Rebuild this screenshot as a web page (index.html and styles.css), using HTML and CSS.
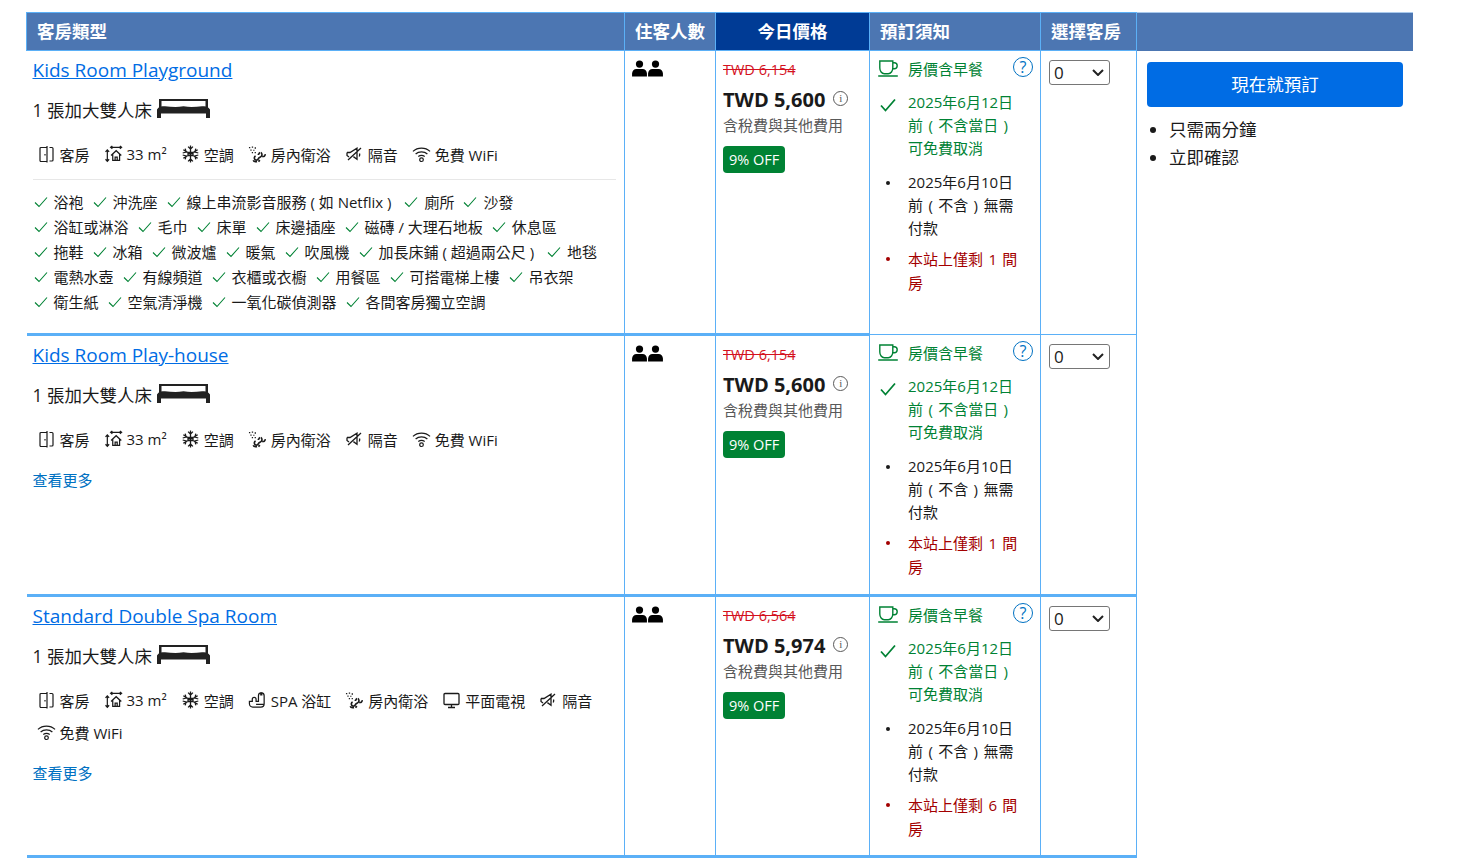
FILE: index.html
```html
<!DOCTYPE html>
<html lang="zh-Hant">
<head>
    <meta charset="UTF-8">
    <title>客房類型</title>
    <link rel="stylesheet" href="styles.css">
</head>
<body>
    <svg class="icon-defs" width="0" height="0">
        <symbol id="i-door" viewBox="0 0 18 18"><path d="M3.500 2.500h6v14h-6a1 1 0 0 1-1-1v-12a1 1 0 0 1 1-1zM9.500 1v16.500M12 2.500h2.500a1 1 0 0 1 1 1v11.500a1 1 0 0 1-1 1H12M7.500 9v1.500" fill="none" stroke="currentColor" stroke-width="1.200"/></symbol>
        <symbol id="i-size" viewBox="0 0 20 18"><path d="M3.500 5v11.500M1.600 6.800l1.900-2.200 1.900 2.200M1.600 14.500l1.900 2.200 1.900-2.200M7 2h11.500M8.800.6 7 2l1.800 1.400M16.700.6 18.500 2l-1.800 1.400M7.400 10.500l5.400-5 5.400 5M9.200 9v6.800h7.200V9M11.700 15.800v-3.500h2.200v3.500" fill="none" stroke="currentColor" stroke-width="1.300"/></symbol>
        <symbol id="i-snow" viewBox="0 0 18 18"><path d="M9 .500v17M1.800 4.800l14.400 8.400M16.200 4.800 1.800 13.200M6.600 1.600 9 4l2.400-2.400M6.600 16.400 9 14l2.400 2.400M1.200 8 4.600 7l-.9-3.300M16.800 10l-3.400 1 .9 3.300M16.800 8l-3.400-1 .9-3.300M1.200 10l3.400 1-.9 3.300M6.500 7.300h5v3.400h-5z" fill="none" stroke="currentColor" stroke-width="1.300"/></symbol>
        <symbol id="i-bath" viewBox="0 0 20 18"><path d="M8 11.200a2.200 2.200 0 1 0 3 2.600c.6-1.700 2.600-1.200 3.400-3 .6-1.300.2-2.800-1-3.300M11.500 7.200c1 .9-.2 2.400-1.300 2M15 11.500c1.800.6 3.200-.6 3-2.300M9.500 17c-2 .4-3.600-.2-4-1.500M11 17l1.500-1.600" fill="none" stroke="currentColor" stroke-width="1.700"/><path d="M1 1.500h1.400v1.400H1zM4 1h1.400v1.400H4zM7 2h1.400v1.400H7zM2.500 4.200h1.300v1.300H2.500zM5.500 4.400h1.300v1.300H5.500zM4 7h1.300v1.300H4zM7 7h1.300v1.300H7z" fill="currentColor"/></symbol>
        <symbol id="i-mute" viewBox="0 0 18 18"><path d="M1.500 7.500h3l7-4.300v11l-3.600-2.600M1.500 7.500v3l2 1.500M2.500 15 15.500 3M14 8.500c.4 1 .3 2-.3 3" fill="none" stroke="currentColor" stroke-width="1.300"/></symbol>
        <symbol id="i-wifi" viewBox="0 0 20 18"><path d="M1 6.200c5-4.600 13-4.600 18 0M3.800 9c3.400-3 9-3 12.400 0M6.600 11.600c2-1.400 4.800-1.400 6.800 0" fill="none" stroke="currentColor" stroke-width="1.300"/><circle cx="10" cy="15" r="1.900" fill="none" stroke="currentColor" stroke-width="1.300"/></symbol>
        <symbol id="i-spa" viewBox="0 0 20 18"><path d="M1.500 10.500h3V8.300a2 2 0 0 1 4 0v2.200H11V4.500a3 3 0 0 1 6 0V13a3.500 3.500 0 0 1-3.500 3.500H5A3.500 3.500 0 0 1 1.500 13zM8.500 13.500H17" fill="none" stroke="currentColor" stroke-width="1.300"/><path d="M12.800 1h2.400v3.200h-2.400z" fill="currentColor"/></symbol>
        <symbol id="i-tv" viewBox="0 0 18 18"><path d="M2.500 2.500h13a1 1 0 0 1 1 1v9a1 1 0 0 1-1 1h-13a1 1 0 0 1-1-1v-9a1 1 0 0 1 1-1zM9 13.500v3M5.500 16.500h7" fill="none" stroke="currentColor" stroke-width="1.300"/></symbol>
        <symbol id="i-bed" viewBox="0 0 55 19"><path d="M3 0h49v2H3z M3 0h2.500v9H3z M49.500 0H52v9h-2.500z" fill="#222"/><path d="M1 10.500c2-3.500 4-3.500 8-3.200 6 .5 11 1.400 18.500 0 7.500 1.400 12.500.5 18.500 0 4-.3 6 0 8 3.200V19h-4v-4.500H5V19H1z" fill="#222"/></symbol>
        <symbol id="i-person" viewBox="0 0 14 16"><circle cx="7" cy="3.800" r="3.400"/><path d="M0 15.500v-2.500c0-3 2-4.500 4-4.500h6c2 0 4 1.500 4 4.500v2.500z"/></symbol>
        <symbol id="i-cup" viewBox="0 0 20 17"><path d="M1.800 1h13v7c0 3-2 5.800-4.500 5.800H6.300C3.800 13.800 1.800 11 1.800 8zM14.800 2.800h1.400a2.500 2.500 0 0 1 0 6H14M.2 16h19.600" fill="none" stroke="currentColor" stroke-width="1.400"/></symbol>
        <symbol id="i-check" viewBox="0 0 14 14"><path d="M1 7.500 5 11.500 13 2.500" fill="none" stroke="currentColor" stroke-width="1.100"/></symbol>
        <symbol id="i-check-bold" viewBox="0 0 16 14"><path d="M1 7.500 5.500 12.500 15 1.500" fill="none" stroke="currentColor" stroke-width="1.800"/></symbol>
    </svg>

    <table class="room-table">
        <thead>
            <tr>
                <th class="col-room">客房類型</th>
                <th class="col-guests">住客人數</th>
                <th class="col-price head-today">今日價格</th>
                <th class="col-notes">預訂須知</th>
                <th class="col-select">選擇客房</th>
                <th class="col-book"></th>
            </tr>
        </thead>
        <tbody>
            <tr class="row-first">
                <td class="cell-room group-end">
                    <a class="room-name" href="#">Kids Room Playground</a>
                    <div class="bed-line">1 張加大雙人床 <svg class="bed-icon"><use href="#i-bed"/></svg></div>
                    <ul class="facilities">
                        <li><svg class="fac-icon"><use href="#i-door"/></svg>客房</li>
                        <li><svg class="fac-icon"><use href="#i-size"/></svg>33 m²</li>
                        <li><svg class="fac-icon"><use href="#i-snow"/></svg>空調</li>
                        <li><svg class="fac-icon"><use href="#i-bath"/></svg>房內衛浴</li>
                        <li><svg class="fac-icon"><use href="#i-mute"/></svg>隔音</li>
                        <li><svg class="fac-icon"><use href="#i-wifi"/></svg>免費 WiFi</li>
                    </ul>
                    <ul class="amenities">
                        <li><svg class="tick"><use href="#i-check"/></svg>浴袍</li>
                        <li><svg class="tick"><use href="#i-check"/></svg>沖洗座</li>
                        <li><svg class="tick"><use href="#i-check"/></svg>線上串流影音服務 ( 如 Netflix )&nbsp;</li>
                        <li><svg class="tick"><use href="#i-check"/></svg>廁所</li>
                        <li><svg class="tick"><use href="#i-check"/></svg>沙發</li>
                        <li><svg class="tick"><use href="#i-check"/></svg>浴缸或淋浴</li>
                        <li><svg class="tick"><use href="#i-check"/></svg>毛巾</li>
                        <li><svg class="tick"><use href="#i-check"/></svg>床單</li>
                        <li><svg class="tick"><use href="#i-check"/></svg>床邊插座</li>
                        <li><svg class="tick"><use href="#i-check"/></svg>磁磚 / 大理石地板</li>
                        <li><svg class="tick"><use href="#i-check"/></svg>休息區</li>
                        <li><svg class="tick"><use href="#i-check"/></svg>拖鞋</li>
                        <li><svg class="tick"><use href="#i-check"/></svg>冰箱</li>
                        <li><svg class="tick"><use href="#i-check"/></svg>微波爐</li>
                        <li><svg class="tick"><use href="#i-check"/></svg>暖氣</li>
                        <li><svg class="tick"><use href="#i-check"/></svg>吹風機</li>
                        <li><svg class="tick"><use href="#i-check"/></svg>加長床鋪 ( 超過兩公尺 )&nbsp;</li>
                        <li><svg class="tick"><use href="#i-check"/></svg>地毯</li>
                        <li><svg class="tick"><use href="#i-check"/></svg>電熱水壺</li>
                        <li><svg class="tick"><use href="#i-check"/></svg>有線頻道</li>
                        <li><svg class="tick"><use href="#i-check"/></svg>衣櫃或衣櫥</li>
                        <li><svg class="tick"><use href="#i-check"/></svg>用餐區</li>
                        <li><svg class="tick"><use href="#i-check"/></svg>可搭電梯上樓</li>
                        <li><svg class="tick"><use href="#i-check"/></svg>吊衣架</li>
                        <li><svg class="tick"><use href="#i-check"/></svg>衛生紙</li>
                        <li><svg class="tick"><use href="#i-check"/></svg>空氣清淨機</li>
                        <li><svg class="tick"><use href="#i-check"/></svg>一氧化碳偵測器</li>
                        <li><svg class="tick"><use href="#i-check"/></svg>各間客房獨立空調</li>
                    </ul>
                </td>
                <td class="cell-guests group-end"><svg class="person"><use href="#i-person"/></svg><svg class="person"><use href="#i-person"/></svg></td>
                <td class="cell-price group-end">
                    <div class="old-price">TWD 6,154</div>
                    <div class="new-price">TWD 5,600 <span class="info">i</span></div>
                    <div class="tax-note">含稅費與其他費用</div>
                    <span class="deal">9% OFF</span>
                </td>
                <td class="cell-notes">
                    <div class="note note-green note-top"><svg class="note-cup"><use href="#i-cup"/></svg><span>房價含早餐</span><span class="help">?</span></div>
                    <div class="note note-green"><svg class="note-check"><use href="#i-check-bold"/></svg><span class="note-text">2025年6月12日前 ( 不含當日 ) 可免費取消</span></div>
                    <div class="note note-plain"><span class="note-dot"></span><span class="note-text">2025年6月10日前 ( 不含 ) 無需付款</span></div>
                    <div class="note note-red"><span class="note-dot"></span><span class="note-text">本站上僅剩 1 間房</span></div>
                </td>
                <td class="cell-select"><select class="qty"><option>0</option></select></td>
                <td class="cell-book" rowspan="3">
                    <button class="book-btn">現在就預訂</button>
                    <ul class="book-points">
                        <li>只需兩分鐘</li>
                        <li>立即確認</li>
                    </ul>
                </td>
            </tr>
            <tr class="row-second">
                <td class="cell-room group-end">
                    <a class="room-name" href="#">Kids Room Play-house</a>
                    <div class="bed-line">1 張加大雙人床 <svg class="bed-icon"><use href="#i-bed"/></svg></div>
                    <ul class="facilities">
                        <li><svg class="fac-icon"><use href="#i-door"/></svg>客房</li>
                        <li><svg class="fac-icon"><use href="#i-size"/></svg>33 m²</li>
                        <li><svg class="fac-icon"><use href="#i-snow"/></svg>空調</li>
                        <li><svg class="fac-icon"><use href="#i-bath"/></svg>房內衛浴</li>
                        <li><svg class="fac-icon"><use href="#i-mute"/></svg>隔音</li>
                        <li><svg class="fac-icon"><use href="#i-wifi"/></svg>免費 WiFi</li>
                    </ul>
                    <a class="see-more" href="#">查看更多</a>
                </td>
                <td class="cell-guests group-end"><svg class="person"><use href="#i-person"/></svg><svg class="person"><use href="#i-person"/></svg></td>
                <td class="cell-price group-end">
                    <div class="old-price">TWD 6,154</div>
                    <div class="new-price">TWD 5,600 <span class="info">i</span></div>
                    <div class="tax-note">含稅費與其他費用</div>
                    <span class="deal">9% OFF</span>
                </td>
                <td class="cell-notes group-end">
                    <div class="note note-green note-top"><svg class="note-cup"><use href="#i-cup"/></svg><span>房價含早餐</span><span class="help">?</span></div>
                    <div class="note note-green"><svg class="note-check"><use href="#i-check-bold"/></svg><span class="note-text">2025年6月12日前 ( 不含當日 ) 可免費取消</span></div>
                    <div class="note note-plain"><span class="note-dot"></span><span class="note-text">2025年6月10日前 ( 不含 ) 無需付款</span></div>
                    <div class="note note-red"><span class="note-dot"></span><span class="note-text">本站上僅剩 1 間房</span></div>
                </td>
                <td class="cell-select group-end"><select class="qty"><option>0</option></select></td>
            </tr>
            <tr class="row-third">
                <td class="cell-room group-end">
                    <a class="room-name" href="#">Standard Double Spa Room</a>
                    <div class="bed-line">1 張加大雙人床 <svg class="bed-icon"><use href="#i-bed"/></svg></div>
                    <ul class="facilities">
                        <li><svg class="fac-icon"><use href="#i-door"/></svg>客房</li>
                        <li><svg class="fac-icon"><use href="#i-size"/></svg>33 m²</li>
                        <li><svg class="fac-icon"><use href="#i-snow"/></svg>空調</li>
                        <li><svg class="fac-icon"><use href="#i-spa"/></svg>SPA 浴缸</li>
                        <li><svg class="fac-icon"><use href="#i-bath"/></svg>房內衛浴</li>
                        <li><svg class="fac-icon"><use href="#i-tv"/></svg>平面電視</li>
                        <li><svg class="fac-icon"><use href="#i-mute"/></svg>隔音</li>
                        <li><svg class="fac-icon"><use href="#i-wifi"/></svg>免費 WiFi</li>
                    </ul>
                    <a class="see-more" href="#">查看更多</a>
                </td>
                <td class="cell-guests group-end"><svg class="person"><use href="#i-person"/></svg><svg class="person"><use href="#i-person"/></svg></td>
                <td class="cell-price group-end">
                    <div class="old-price">TWD 6,564</div>
                    <div class="new-price">TWD 5,974 <span class="info">i</span></div>
                    <div class="tax-note">含稅費與其他費用</div>
                    <span class="deal">9% OFF</span>
                </td>
                <td class="cell-notes group-end">
                    <div class="note note-green note-top"><svg class="note-cup"><use href="#i-cup"/></svg><span>房價含早餐</span><span class="help">?</span></div>
                    <div class="note note-green"><svg class="note-check"><use href="#i-check-bold"/></svg><span class="note-text">2025年6月12日前 ( 不含當日 ) 可免費取消</span></div>
                    <div class="note note-plain"><span class="note-dot"></span><span class="note-text">2025年6月10日前 ( 不含 ) 無需付款</span></div>
                    <div class="note note-red"><span class="note-dot"></span><span class="note-text">本站上僅剩 6 間房</span></div>
                </td>
                <td class="cell-select group-end"><select class="qty"><option>0</option></select></td>
            </tr>
        </tbody>
    </table>
</body>
</html>
```

FILE: styles.css
```css
body {
    margin: 0;
    padding: 12px 46px 0 26px;
    background-color: #ffffff;
    color: #1a1a1a;
    font-family: "Open Sans", "Noto Sans CJK TC", sans-serif;
    font-size: 15px;
    overflow: hidden;
}
.icon-defs {
    position: absolute;
}
ul {
    list-style: none;
    margin: 0;
    padding: 0;
}
.room-table {
    width: 1386px;
    table-layout: fixed;
    border-collapse: collapse;
}
.room-table th {
    box-sizing: border-box;
    height: 38px;
    padding: 0 10px 2px;
    background-color: #4c76b2;
    border: 1px solid #5bb0f7;
    color: #ffffff;
    font-size: 17.5px;
    font-weight: 700;
    text-align: left;
}
.room-table th.head-today {
    background-color: #003b95;
    text-align: center;
}
.room-table th.col-book {
    border-width: 1px 0 0 1px;
    border-top-color: #a9c9ec;
}
.col-room { width: 598px; }
.col-guests { width: 91px; }
.col-price { width: 154px; }
.col-notes { width: 171px; }
.col-select { width: 96px; }
.col-book { width: 276px; }

.room-table td {
    box-sizing: border-box;
    padding: 0;
    border: 1px solid #5bb0f7;
    vertical-align: top;
}
.room-table td.group-end {
    border-bottom: 3px solid #5bb0f7;
}
.row-first td { height: 284px; }
.row-second td { height: 261px; }
.row-third td { height: 261px; }
.room-table td.cell-book {
    border-width: 0 0 0 1px;
    padding: 11px 10px 0;
}

.room-table td.cell-room {
    padding: 5px 8px 0 6px;
    border-left: none;
}
.room-name {
    display: block;
    width: fit-content;
    color: #006ce4;
    font-size: 19px;
    line-height: 28px;
}
.bed-line {
    display: flex;
    align-items: center;
    gap: 4px;
    height: 26px;
    margin-top: 12px;
    font-size: 17.5px;
}
.bed-icon {
    width: 55px;
    height: 19px;
    margin-top: -2px;
}
.facilities {
    display: flex;
    flex-wrap: wrap;
    column-gap: 14px;
    row-gap: 8px;
    margin-top: 20px;
    padding-left: 4px;
}
.facilities li {
    display: flex;
    align-items: center;
    gap: 4px;
    height: 24px;
    font-size: 15px;
}
.fac-icon {
    width: 19px;
    height: 18px;
}
.amenities {
    display: flex;
    flex-wrap: wrap;
    margin-top: 13px;
    padding-top: 9px;
    border-top: 1px solid #e7e7e7;
}
.amenities li {
    display: flex;
    align-items: center;
    gap: 6px;
    height: 25px;
    margin-right: 8px;
    font-size: 15px;
    white-space: pre;
}
.tick {
    width: 14px;
    height: 14px;
    margin-left: 1px;
    color: #008234;
}
.see-more {
    display: block;
    margin-top: 17px;
    color: #0071c2;
    font-size: 15px;
    line-height: 24px;
    text-decoration: none;
}

.room-table td.cell-guests {
    padding: 9px 0 0 7px;
    line-height: 0;
}
.person {
    width: 15px;
    height: 17px;
    margin-right: 1px;
    fill: #000000;
}

.room-table td.cell-price {
    padding: 8px 8px 0 7px;
}
.old-price {
    color: #d4111e;
    font-size: 14.5px;
    line-height: 22px;
    text-decoration: line-through;
}
.new-price {
    display: flex;
    align-items: center;
    gap: 8px;
    margin-top: 5px;
    font-size: 20px;
    font-weight: 700;
    line-height: 28px;
}
.info {
    display: flex;
    align-items: center;
    justify-content: center;
    width: 13px;
    height: 13px;
    margin-top: -4px;
    border: 1px solid #595959;
    border-radius: 50%;
    color: #595959;
    font-family: "Liberation Serif", serif;
    font-size: 11px;
    font-weight: 400;
}
.tax-note {
    color: #595959;
    font-size: 15px;
    line-height: 22px;
}
.deal {
    display: inline-block;
    margin-top: 10px;
    padding: 0 6px;
    background-color: #008234;
    border-radius: 4px;
    color: #ffffff;
    font-size: 14.5px;
    line-height: 27px;
}

.room-table td.cell-notes {
    padding: 6px 7px 0 8px;
}
.note {
    display: flex;
    gap: 10px;
    margin-bottom: 11px;
    font-size: 15px;
    line-height: 23px;
}
.note-top {
    align-items: center;
    height: 24px;
    margin-bottom: 10px;
}
.note-plain {
    margin-bottom: 7px;
}
.note-green {
    color: #008234;
}
.note-red {
    color: #a30000;
    line-height: 24px;
}
.note-cup {
    width: 20px;
    height: 17px;
    margin-top: -2px;
}
.note-check {
    flex: none;
    width: 16px;
    height: 14px;
    margin: 7px 2px 0 2px;
}
.note-dot {
    flex: none;
    width: 4px;
    height: 4px;
    margin: 10px 8px 0 8px;
    background-color: currentColor;
    border-radius: 50%;
}
.note-text {
    width: 115px;
    word-spacing: 1.5px;
}
.help {
    display: flex;
    flex: none;
    align-items: center;
    justify-content: center;
    box-sizing: border-box;
    width: 20px;
    height: 20px;
    margin-top: -4px;
    margin-left: 20px;
    border: 1.5px solid #0071c2;
    border-radius: 50%;
    color: #0071c2;
    font-size: 16px;
    line-height: 1;
}

.room-table td.cell-select {
    padding: 9px 0 0 8px;
}
.qty {
    width: 61px;
    height: 25px;
    padding: 0 0 2px 4px;
    appearance: none;
    background: #ffffff url("data:image/svg+xml,%3Csvg xmlns='http://www.w3.org/2000/svg' width='12' height='7'%3E%3Cpath d='M1 1l5 5 5-5' fill='none' stroke='%23222' stroke-width='2'/%3E%3C/svg%3E") no-repeat right 5px center;
    border: 1px solid #767676;
    border-radius: 3px;
    color: #1a1a1a;
    font-family: "Open Sans", sans-serif;
    font-size: 17px;
}

.book-btn {
    display: block;
    width: 256px;
    height: 45px;
    padding-bottom: 2px;
    background-color: #006ce4;
    border: none;
    border-radius: 4px;
    color: #ffffff;
    font-family: inherit;
    font-size: 17.5px;
}
.book-points {
    margin-top: 8px;
    padding-left: 22px;
    list-style: disc;
    font-size: 17.5px;
    line-height: 28px;
}
```
